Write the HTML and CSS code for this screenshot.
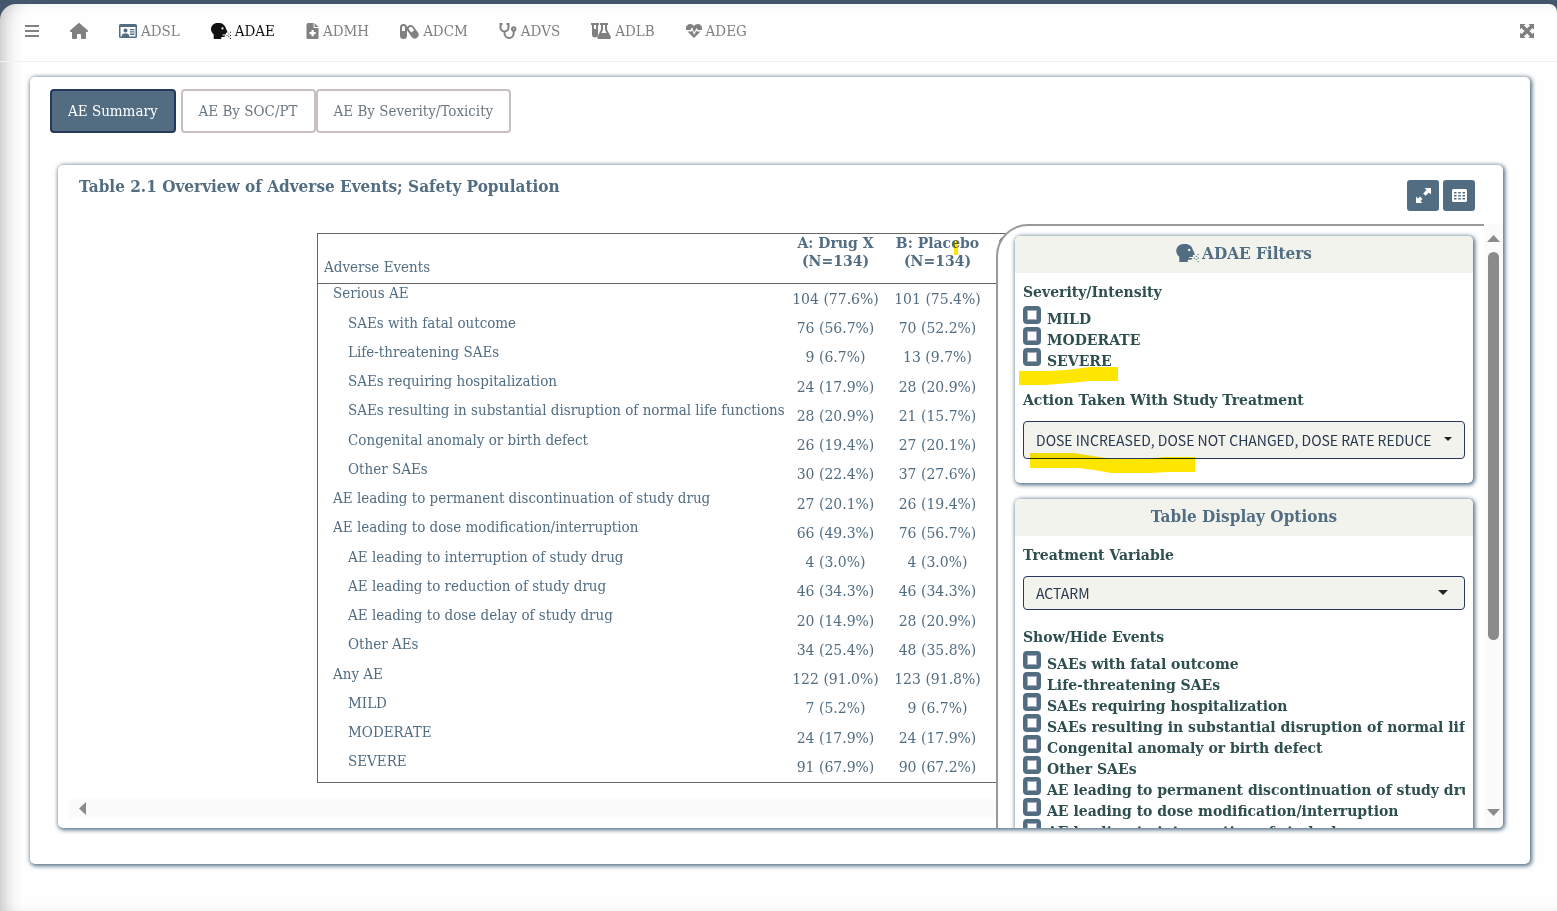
FILE: index.html
```html
<!DOCTYPE html>
<html lang="en">
<head>
<meta charset="utf-8">
<title>ADAE Summary</title>
<link rel="stylesheet" href="styles.css">
</head>
<body>
<svg class="sprite" aria-hidden="true">
  <symbol id="cough" viewBox="0 0 20 16">
    <path d="M6.500 0C2.900 0 0 2.600 0 6.100c0 2.300 1.100 4.100 2.700 5.300V16h7.600v-2h2.200c1.100 0 1.700-.6 1.700-1.500H11.500v-1h3.300v-1.800h1c.6 0 .8-.5.6-1L14.700 5C14 2 11.300 0 8.500 0zM11.500 4.300a1.100 1.100 0 1 1 0 2.200 1.100 1.100 0 0 1 0-2.200z" fill-rule="evenodd"/>
    <path d="M15.500 12h1v1h-1zM17.300 10.500h1v1h-1zM19 8.800h1v1h-1zM17.300 13.300h1v1h-1zM19 12h1v1h-1zM19 15h1v1h-1z"/>
  </symbol>
</svg>
<div class="page">
  <header class="navbar">
    <nav class="menu" aria-label="Main">
      <button class="icon-btn" type="button" aria-label="Menu"><svg width="14" height="12" viewBox="0 0 14 12"><path d="M0 0h14v2H0zM0 5h14v2H0zM0 10h14v2H0z"/></svg></button>
      <a href="#home" aria-label="Home"><svg width="18" height="16" viewBox="0 0 576 512"><path d="M575.8 255.5c0 18-15 32.100-32 32.100h-32l.7 160.200c0 2.700-.2 5.400-.5 8.100V472c0 22.100-17.900 40-40 40H392c-22.100 0-40-17.900-40-40V384c0-17.700-14.300-32-32-32H256c-17.700 0-32 14.300-32 32v88c0 22.100-17.900 40-40 40H104c-22.100 0-40-17.900-40-40V287.600H32c-18 0-32-14-32-32.100 0-9 3-17 10-24L266.400 8c7-7 15-8 22-8s15 2 21 7L564.800 231.500c8 7 12 15 11 24z"/></svg></a>
      <a href="#adsl"><svg class="blue" width="18" height="14" viewBox="0 0 18 14"><path fill-rule="evenodd" d="M1.500 0h15A1.500 1.500 0 0 1 18 1.500v11a1.500 1.500 0 0 1-1.500 1.500h-15A1.500 1.500 0 0 1 0 12.500v-11A1.500 1.500 0 0 1 1.500 0zM1.500 3v9.500h1.200C2.700 10.600 3.800 9.500 5.300 9.500h2.400c1.500 0 2.600 1.100 2.600 3h6.200V3z"/><circle cx="6.500" cy="6.500" r="2"/><path d="M11 5h4.500v1.300H11zM11 7.300h4.500v1.300H11zM11 9.600h4.500v1.300H11z"/></svg>ADSL</a>
      <a href="#adae" class="current" aria-current="page"><svg width="20" height="16"><use href="#cough"/></svg>ADAE</a>
      <a href="#admh"><svg width="13" height="16" viewBox="0 0 12 16"><path fill-rule="evenodd" d="M1.500 0H7v4.200c0 .5.300.8.800.8H12v9.500a1.500 1.500 0 0 1-1.500 1.500h-9A1.500 1.500 0 0 1 0 14.500v-13A1.500 1.500 0 0 1 1.500 0zM5 7v2H3v2.200h2v2h2.200v-2h2V9h-2V7z"/><path d="M8 0l4 4H8z"/></svg>ADMH</a>
      <a href="#adcm"><svg width="19" height="15" viewBox="0 0 19 15"><path fill-rule="evenodd" d="M3.500 0A3.500 3.500 0 0 1 7 3.500v8a3.500 3.500 0 0 1-7 0v-8A3.500 3.500 0 0 1 3.500 0zM3.500 2C2.600 2 2 2.700 2 3.500V7h3V3.500C5 2.700 4.400 2 3.500 2z"/><path fill-rule="evenodd" d="M8.300 1.700a3.700 3.700 0 0 1 5.300.9l4.200 5.700a3.800 3.800 0 0 1-6.100 4.700L7.500 7a3.700 3.700 0 0 1 .8-5.300zM9.600 3.300a1.700 1.700 0 0 0-.4 2.500l2 2.700 3-2.200-2-2.700a1.700 1.700 0 0 0-2.600-.3z"/></svg>ADCM</a>
      <a href="#advs"><svg class="line" width="18" height="16" viewBox="0 0 18 16"><path d="M3.500 1H1.500v3.500a4 4 0 0 0 8 0V1h-2M5.500 8.500v1.800a4.600 4.600 0 0 0 9.200 0V8"/><circle cx="14.700" cy="6" r="1.700"/></svg>ADVS</a>
      <a href="#adlb"><svg width="20" height="16" viewBox="0 0 20 16"><path fill-rule="evenodd" d="M0 0h8v2H7v9.500a3 3 0 0 1-6 0V2H0zM3 2v4h2V2z"/><path fill-rule="evenodd" d="M9 0h8v2h-1v4.500l3.700 7c.6 1.200 0 2.500-1.300 2.500H7.800c-1.300 0-1.900-1.300-1.300-2.500L10 6.500V2H9zM12 2v5l-1.600 3h5.200L14 7V2z"/></svg>ADLB</a>
      <a href="#adeg"><svg width="16" height="14" viewBox="0 0 16 14"><path d="M0 6C-.6 2 1.800 0 4 0c1.700 0 3 .8 4 2 1-1.200 2.300-2 4-2 2.200 0 4.600 2 4 6h-4.200L10.500 4 8.200 8.500 6 3 4.500 6zM1.500 7.500h4L6.100 6l2 5L10.500 6.500l.5 1h3.500L8 14z"/></svg>ADEG</a>
    </nav>
    <button class="icon-btn" type="button" aria-label="Full screen"><svg width="14" height="14" viewBox="0 0 14 14"><path d="M0 0h5.500L4 1.500l3 3 3-3L8.500 0H14v5.500L12.500 4l-3 3 3 3L14 8.500V14H8.500l1.500-1.500-3-3-3 3L5.500 14H0V8.500L1.500 10l3-3-3-3L0 5.500z"/></svg></button>
  </header>

  <main class="card outer">
    <div class="tabs" role="tablist">
      <button class="tab active" type="button" role="tab" aria-selected="true">AE Summary</button>
      <button class="tab" type="button" role="tab" aria-selected="false">AE By SOC/PT</button>
      <button class="tab" type="button" role="tab" aria-selected="false">AE By Severity/Toxicity</button>
    </div>

    <section class="card inner">
      <div class="head">
        <h1>Table 2.1 Overview of Adverse Events; Safety Population</h1>
        <div class="tools">
          <button class="tool" type="button" aria-label="Expand"><svg width="15" height="15" viewBox="0 0 15 15"><path d="M8.500 0H15v6.500l-2-2-3.500 3.300-2.300-2.300L10.500 2zM0 8.500l2 2 2-2L6.500 11l-2 2 2 2H0z"/></svg></button>
          <button class="tool" type="button" aria-label="Show table"><svg width="15" height="13" viewBox="0 0 15 13"><path fill-rule="evenodd" d="M1.500 0h12A1.500 1.500 0 0 1 15 1.500v10a1.500 1.500 0 0 1-1.500 1.500h-12A1.500 1.500 0 0 1 0 11.500v-10A1.500 1.500 0 0 1 1.500 0zM2 3v1.500h2.500V3zM6.200 3v1.500h2.600V3zM10.500 3v1.500H13V3zM2 6v1.500h2.500V6zM6.200 6v1.500h2.600V6zM10.500 6v1.500H13V6zM2 9v1.500h2.500V9zM6.200 9v1.500h2.600V9zM10.500 9v1.500H13V9z"/></svg></button>
        </div>
      </div>

      <div class="body">
        <div class="report">
          <table>
            <colgroup><col class="c-name"><col class="c-arm"><col class="c-arm"><col></colgroup>
            <thead>
              <tr><th class="name" scope="col">Adverse Events</th><th scope="col">A: Drug X<br>(N=134)</th><th scope="col">B: Placebo<br>(N=134)</th><th class="rest" scope="col">C:</th></tr>
            </thead>
            <tbody>
              <tr><td>Serious AE</td><td>104 (77.6%)</td><td>101 (75.4%)</td><td></td></tr>
              <tr class="sub"><td>SAEs with fatal outcome</td><td>76 (56.7%)</td><td>70 (52.2%)</td><td></td></tr>
              <tr class="sub"><td>Life-threatening SAEs</td><td>9 (6.7%)</td><td>13 (9.7%)</td><td></td></tr>
              <tr class="sub"><td>SAEs requiring hospitalization</td><td>24 (17.9%)</td><td>28 (20.9%)</td><td></td></tr>
              <tr class="sub"><td>SAEs resulting in substantial disruption of normal life functions</td><td>28 (20.9%)</td><td>21 (15.7%)</td><td></td></tr>
              <tr class="sub"><td>Congenital anomaly or birth defect</td><td>26 (19.4%)</td><td>27 (20.1%)</td><td></td></tr>
              <tr class="sub"><td>Other SAEs</td><td>30 (22.4%)</td><td>37 (27.6%)</td><td></td></tr>
              <tr><td>AE leading to permanent discontinuation of study drug</td><td>27 (20.1%)</td><td>26 (19.4%)</td><td></td></tr>
              <tr><td>AE leading to dose modification/interruption</td><td>66 (49.3%)</td><td>76 (56.7%)</td><td></td></tr>
              <tr class="sub"><td>AE leading to interruption of study drug</td><td>4 (3.0%)</td><td>4 (3.0%)</td><td></td></tr>
              <tr class="sub"><td>AE leading to reduction of study drug</td><td>46 (34.3%)</td><td>46 (34.3%)</td><td></td></tr>
              <tr class="sub"><td>AE leading to dose delay of study drug</td><td>20 (14.9%)</td><td>28 (20.9%)</td><td></td></tr>
              <tr class="sub"><td>Other AEs</td><td>34 (25.4%)</td><td>48 (35.8%)</td><td></td></tr>
              <tr><td>Any AE</td><td>122 (91.0%)</td><td>123 (91.8%)</td><td></td></tr>
              <tr class="sub"><td>MILD</td><td>7 (5.2%)</td><td>9 (6.7%)</td><td></td></tr>
              <tr class="sub"><td>MODERATE</td><td>24 (17.9%)</td><td>24 (17.9%)</td><td></td></tr>
              <tr class="sub"><td>SEVERE</td><td>91 (67.9%)</td><td>90 (67.2%)</td><td></td></tr>
            </tbody>
          </table>
          <div class="hbar"><svg width="7" height="13" viewBox="0 0 7 13"><path d="M7 0v13L0 6.500z"/></svg></div>
        </div>
        <div class="vbar">
          <svg width="13" height="7" viewBox="0 0 13 7"><path d="M0 7h13L6.500 0z"/></svg>
          <div class="thumb"></div>
          <svg width="13" height="7" viewBox="0 0 13 7"><path d="M0 0h13L6.500 7z"/></svg>
        </div>

        <aside class="panel">
          <section class="card box">
            <h2><svg width="23" height="18"><use href="#cough"/></svg>ADAE Filters</h2>
            <div class="box-body">
              <fieldset>
                <legend>Severity/Intensity</legend>
                <label><input type="checkbox">MILD</label>
                <label><input type="checkbox">MODERATE</label>
                <label><input type="checkbox">SEVERE</label>
              </fieldset>
              <label class="title" for="action">Action Taken With Study Treatment</label>
              <div class="pick tall"><select id="action"><option>DOSE INCREASED, DOSE NOT CHANGED, DOSE RATE REDUCE</option></select></div>
            </div>
          </section>
          <section class="card box">
            <h2>Table Display Options</h2>
            <div class="box-body">
              <label class="title" for="trt">Treatment Variable</label>
              <div class="pick"><select id="trt"><option>ACTARM</option></select></div>
              <fieldset>
                <legend>Show/Hide Events</legend>
                <label><input type="checkbox">SAEs with fatal outcome</label>
                <label><input type="checkbox">Life-threatening SAEs</label>
                <label><input type="checkbox">SAEs requiring hospitalization</label>
                <label><input type="checkbox">SAEs resulting in substantial disruption of normal life functions</label>
                <label><input type="checkbox">Congenital anomaly or birth defect</label>
                <label><input type="checkbox">Other SAEs</label>
                <label><input type="checkbox">AE leading to permanent discontinuation of study drug</label>
                <label><input type="checkbox">AE leading to dose modification/interruption</label>
                <label><input type="checkbox">AE leading to interruption of study drug</label>
              </fieldset>
            </div>
          </section>
          <svg class="marks" width="180" height="110" viewBox="1019 366 180 110" aria-hidden="true"><path d="M1019 371h27l20-1 24-3h28v14h-28l-20 2-25 2h-26zM1030 453h44l25 4 12 2h38l15-2h31v15h-26l-20 1h-38l-17-3-15-2h-49z"/></svg>
        </aside>
        <div class="dash" aria-hidden="true"></div>
      </div>
    </section>
  </main>
</div>
</body>
</html>
```
FILE: styles.css
```css
:root {
  --slate: #526d82;
  --navy: #27375d;
  --ink: #2f4f4f;
  --cream: #f2f3ed;
  --grey: #808080;
  --serif: "DejaVu Serif Condensed", "DejaVu Serif", serif;
  --serif-wide: "DejaVu Serif", serif;
  --sans: "Noto Sans CJK SC", "Open Sans", sans-serif;
}
* { box-sizing: border-box; }
body {
  margin: 0;
  background: #44566c;
  color: var(--slate);
  font: 15px/20px var(--serif);
}
svg { display: block; flex: none; fill: currentColor; }
button { font: inherit; cursor: pointer; }
.sprite { position: absolute; width: 0; height: 0; }
.page {
  margin-top: 4px;
  min-height: calc(100vh - 4px);
  padding-bottom: 46px;
  border-radius: 16px 8px 0 0;
  background: #fefefe;
  box-shadow: inset 14px 0 20px -12px rgba(0, 0, 0, .3);
}

.navbar {
  display: flex;
  align-items: center;
  justify-content: space-between;
  height: 58px;
  padding: 0 23px 3px 25px;
  border-bottom: 1px solid #f0f0f0;
}
.menu { display: flex; align-items: center; gap: 31px; }
.menu a {
  display: flex;
  align-items: center;
  gap: 4px;
  color: var(--grey);
  text-decoration: none;
}
.menu a.current { color: #111; }
.menu .blue { color: var(--slate); }
.menu .line { fill: none; stroke: currentColor; stroke-width: 2; }
.icon-btn { padding: 0; border: 0; background: none; color: var(--grey); }

.card {
  border-radius: 5px;
  background: #fff;
  box-shadow: 1px 1px 4px 1px var(--slate);
}
.outer { margin: 15px 27px 0 30px; padding: 12px 27px 36px 28px; }
.tabs { display: flex; margin-left: -8px; }
.tab {
  height: 44px;
  padding: 0 16px;
  border: 2px solid #c8c0c0;
  border-radius: 4px;
  background: #fff;
  color: #6b7780;
}
.tab.active {
  margin-right: 5px;
  border-color: var(--navy);
  background: var(--slate);
  color: #fff;
}

.inner { margin-top: 32px; overflow: hidden; }
.head {
  display: flex;
  justify-content: space-between;
  height: 59px;
  padding: 11px 28px 0 21px;
}
h1, h2 { margin: 0; font-size: 17px; line-height: 20px; }
.tools { display: flex; gap: 4px; padding-top: 4px; }
.tool {
  display: grid;
  place-items: center;
  width: 32px;
  height: 31px;
  padding: 0;
  border: 0;
  border-radius: 3px;
  background: var(--slate);
  color: #fff;
}

.body { position: relative; display: flex; }
.report { flex: 1; padding: 9px 0 10px 10px; }
table {
  width: 918px;
  height: 550px;
  margin: 0 auto;
  table-layout: fixed;
  border-collapse: collapse;
  border: 1px solid #666;
}
.c-name { width: 467px; }
.c-arm { width: 102px; }
thead tr { height: 50px; border-bottom: 1px solid #666; }
th, td {
  padding: 0;
  text-align: center;
  white-space: nowrap;
  font: 14px/18px var(--serif-wide);
}
th { vertical-align: top; font-weight: 700; }
th.name { padding: 0 0 6px 6px; text-align: left; vertical-align: bottom; font: 15px/20px var(--serif); }
th.rest { padding-left: 10px; text-align: left; }
td:first-child { padding-left: 15px; text-align: left; vertical-align: top; font: 15px/18px var(--serif); }
.sub td:first-child { padding-left: 30px; }
.hbar { display: flex; align-items: center; height: 19px; margin-top: 16px; padding-left: 11px; background: #fbfbfb; color: #8b8b8b; }
.vbar {
  display: flex;
  flex-direction: column;
  align-items: center;
  width: 19px;
  padding: 11px 0 12px;
  background: #fbfbfb;
  color: #8b8b8b;
}
.thumb { width: 11px; height: 388px; margin: 10px 0 auto; border-radius: 6px; background: currentColor; }

.panel {
  position: absolute;
  inset: 0 19px 0 auto;
  width: 488px;
  overflow: hidden;
  padding: 10px 11px 0 17px;
  border: solid #999;
  border-width: 2px 0 0 2px;
  border-radius: 32px 0 0 0;
  background: #fff;
  color: var(--ink);
}
.box { margin-bottom: 16px; padding-bottom: 24px; }
.box h2 {
  display: flex;
  align-items: center;
  justify-content: center;
  gap: 3px;
  height: 37px;
  padding-bottom: 3px;
  border-radius: 5px 5px 0 0;
  background: var(--cream);
  color: var(--slate);
}
.box-body { padding: 9px 8px 0; font: 700 14px/20px var(--serif-wide); }
fieldset { min-width: 0; margin: 0 0 21px; padding: 0; border: 0; overflow: hidden; }
legend, .title { display: block; padding: 0; line-height: 20px; }
fieldset label { display: flex; height: 21px; gap: 6px; line-height: 26px; white-space: nowrap; }
legend { margin-bottom: 4px; }
input {
  flex: none;
  width: 18px;
  height: 18px;
  margin: 0;
  appearance: none;
  border: 4px solid var(--slate);
  border-radius: 4px;
  background: #fff;
  box-shadow: inset 0 0 0 1px #a5a9be;
}
.pick { position: relative; margin-top: 11px; }
.pick::after {
  content: "";
  position: absolute;
  top: 14px;
  right: 17px;
  border: 5px solid transparent;
  border-top-color: #212529;
  border-bottom: 0;
}
.pick.tall::after { top: 16px; right: 13px; border-width: 4px 4px 0; }
select {
  display: block;
  width: 100%;
  height: 34px;
  padding: 0 20px 0 12px;
  appearance: none;
  border: 1px solid var(--navy);
  border-radius: 4px;
  background: var(--cream);
  color: #27374d;
  font: 14px/20px var(--sans);
}
.tall select { height: 38px; }
.pick + fieldset { margin-top: 17px; }
.marks { position: absolute; top: 140px; left: 21px; fill: #ffe600; mix-blend-mode: multiply; }
.dash { position: absolute; top: 17px; left: 896px; width: 4px; height: 14px; background: #ffe600; mix-blend-mode: multiply; }
```
